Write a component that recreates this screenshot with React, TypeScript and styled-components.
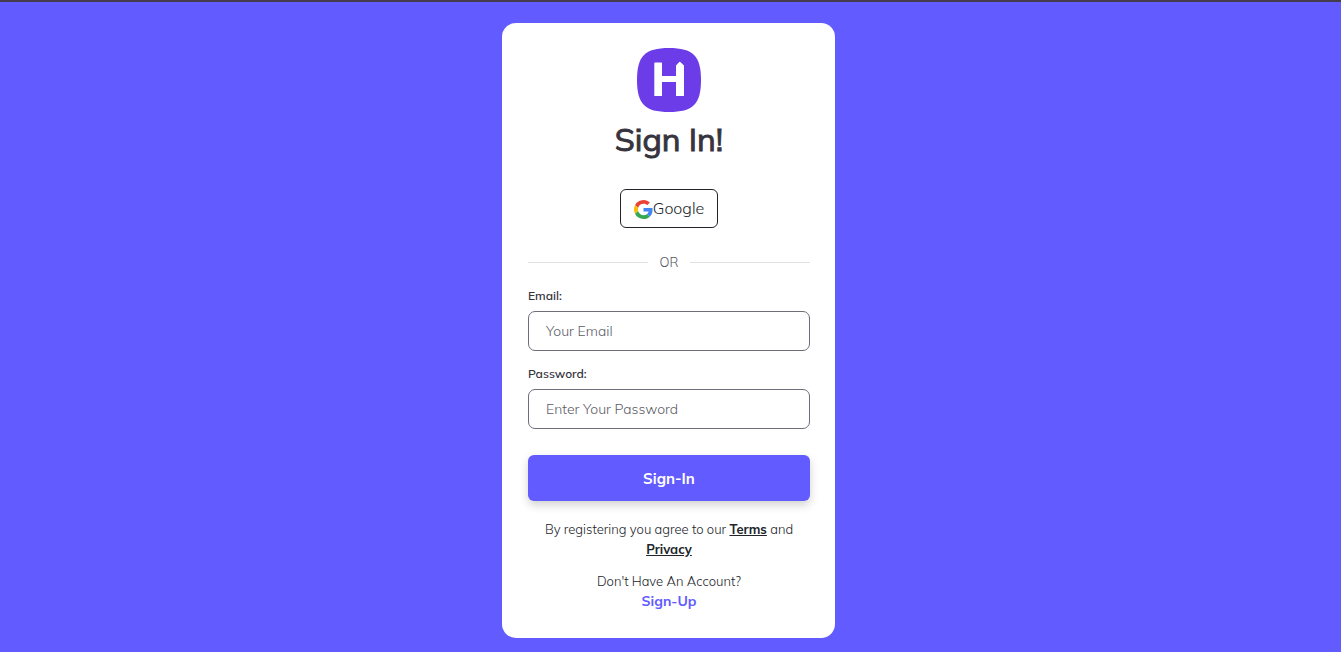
import React from "react";
import styled, { createGlobalStyle } from "styled-components";

const GlobalStyle = createGlobalStyle`
  *, *::before, *::after { box-sizing: border-box; }
  body {
    margin: 0;
    background: #625bff;
    color: #212529;
    font-family: Mulish, Muli, Lato, "Liberation Sans", sans-serif;
    font-weight: 300;
  }
  button, input { font-family: inherit; font-weight: inherit; }
`;

const Page = styled.main`
  display: flex;
  justify-content: center;
  align-items: flex-start;
  min-height: 100vh;
  padding: 21px 4px 14px 0;
  border-top: 2px solid #453c4d;
`;

const Card = styled.section`
  display: flex;
  flex-direction: column;
  align-items: center;
  width: 100%;
  max-width: 333px;
  padding: 25px 25px 27px 26px;
  border-radius: 14px;
  background: #fff;
`;

const Logo = styled.svg`
  display: block;
  width: 64px;
  height: 64px;
`;

const Title = styled.h1`
  margin: 5px 0 28px;
  color: #36343d;
  font-size: 32px;
  line-height: 44px;
  font-weight: 400;
  -webkit-text-stroke: 1px currentColor;
`;

const GoogleButton = styled.button`
  display: flex;
  align-items: center;
  justify-content: center;
  height: 39px;
  padding: 0 13px 2px;
  border: 1px solid #212529;
  border-radius: 6px;
  background: #fff;
  color: #212529;
  font-size: 16px;
  line-height: 24px;
  cursor: pointer;

  svg {
    width: 19px;
    height: 19px;
    margin-top: 4px;
  }
`;

const Divider = styled.div`
  display: flex;
  align-items: center;
  gap: 12px;
  width: 100%;
  margin: 24px 0 16px;
  color: #56555f;
  font-size: 13px;
  line-height: 20px;

  &::before, &::after {
    content: "";
    flex: 1;
    height: 1px;
    background: #e0e0e2;
  }
`;

const Form = styled.form`
  display: flex;
  flex-direction: column;
  width: 100%;
`;

const Field = styled.div`
  display: flex;
  flex-direction: column;
  gap: 7px;
  margin-bottom: 15px;
`;

const Label = styled.label`
  color: #36343d;
  font-size: 12px;
  line-height: 16px;
  font-weight: 600;
`;

const Input = styled.input`
  width: 100%;
  height: 40px;
  padding: 0 17px;
  border: 1px solid #6e6d7a;
  border-radius: 7px;
  background: #fff;
  color: #36343d;
  font-size: 14px;

  &::placeholder { color: #5c5b66; opacity: 1; }
`;

const SubmitButton = styled.button`
  height: 46px;
  margin-top: 11px;
  border: 0;
  border-radius: 6px;
  background: #625bff;
  box-shadow: 0 4px 10px rgba(0, 0, 0, 0.18);
  color: #fff;
  font-size: 15px;
  font-weight: 700;
  cursor: pointer;
`;

const Note = styled.p<{ $gap: number }>`
  margin: ${({ $gap }) => $gap}px 0 0;
  font-size: 13px;
  line-height: 20px;
  text-align: center;
`;

const PolicyLink = styled.a`
  color: #212529;
  font-weight: 700;
  text-decoration: underline;
`;

const SignUpLink = styled.a`
  color: #625bff;
  font-size: 14px;
  line-height: 20px;
  font-weight: 700;
  text-decoration: none;
`;

export default function App() {
  return (
    <>
      <GlobalStyle />
      <Page>
        <Card>
          <Logo viewBox="0 0 64 64" role="img" aria-label="H">
            <path
              fill="#6c3ce9"
              d="M32 0C56 0 64 8 64 32S56 64 32 64 0 56 0 32 8 0 32 0Z"
            />
            <path
              fill="#fff"
              d="M18 14.500h6.500q.5 0 .5.5V28h14V17.500l3-3.300q.8-.9 1.600 0L47 17.500v30q0 .5-.5.5h-7q-.5 0-.5-.5V34H25v13.500q0 .5-.5.5h-6.500q-.7 0-.7-.5V15q0-.5.700-.5Z"
            />
          </Logo>
          <Title>Sign In!</Title>
          <GoogleButton type="button">
            <svg viewBox="0 0 48 48" aria-hidden="true">
              <path fill="#ea4335" d="M24 9.500c3.540 0 6.710 1.220 9.210 3.600l6.850-6.850C35.900 2.380 30.470 0 24 0 14.620 0 6.510 5.380 2.560 13.220l7.980 6.190C12.430 13.720 17.740 9.500 24 9.500z" />
              <path fill="#4285f4" d="M46.980 24.550c0-1.570-.15-3.090-.38-4.550H24v9.020h12.940c-.58 2.960-2.260 5.480-4.780 7.180l7.730 6c4.510-4.180 7.090-10.360 7.090-17.650z" />
              <path fill="#fbbc05" d="M10.530 28.590c-.48-1.450-.76-2.990-.76-4.590s.27-3.140.76-4.590l-7.980-6.190C.92 16.460 0 20.120 0 24c0 3.880.92 7.540 2.560 10.780l7.970-6.190z" />
              <path fill="#34a853" d="M24 48c6.480 0 11.930-2.130 15.890-5.810l-7.730-6c-2.150 1.450-4.920 2.300-8.160 2.300-6.260 0-11.570-4.220-13.470-9.910l-7.980 6.190C6.510 42.620 14.620 48 24 48z" />
            </svg>
            Google
          </GoogleButton>
          <Divider>OR</Divider>
          <Form onSubmit={(event) => event.preventDefault()}>
            <Field>
              <Label htmlFor="email">Email:</Label>
              <Input id="email" type="email" placeholder="Your Email" />
            </Field>
            <Field>
              <Label htmlFor="password">Password:</Label>
              <Input id="password" type="password" placeholder="Enter Your Password" />
            </Field>
            <SubmitButton type="submit">Sign-In</SubmitButton>
          </Form>
          <Note $gap={18}>
            By registering you agree to our <PolicyLink href="#terms">Terms</PolicyLink> and{" "}
            <PolicyLink href="#privacy">Privacy</PolicyLink>
          </Note>
          <Note $gap={12}>Don't Have An Account?</Note>
          <SignUpLink href="#sign-up">Sign-Up</SignUpLink>
        </Card>
      </Page>
    </>
  );
}
